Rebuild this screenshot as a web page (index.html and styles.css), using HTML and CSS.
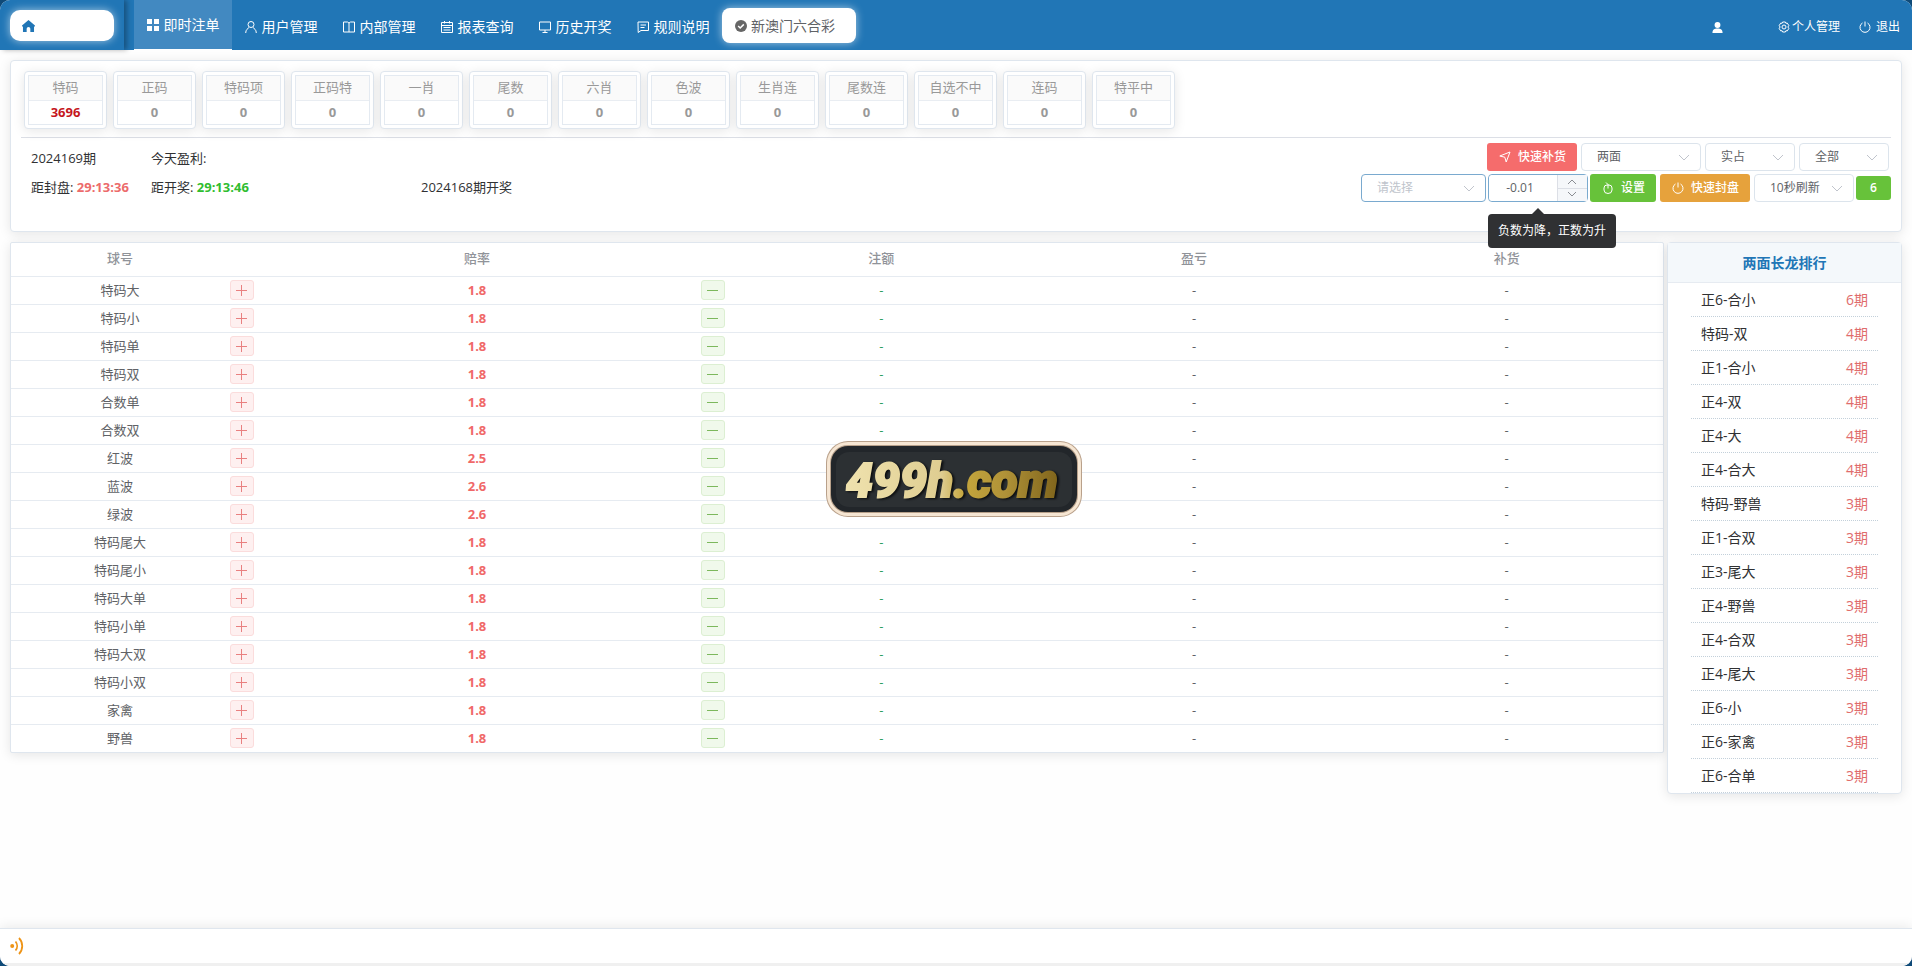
FILE: index.html
```html
<!DOCTYPE html>
<html lang="zh-CN">
<head>
<meta charset="utf-8">
<title>即时注单</title>
<link rel="stylesheet" href="styles.css">
</head>
<body>
<div class="app">
  <header class="topbar">
    <div class="brand">
      <a class="brand-box" href="#" aria-label="首页">
        <svg class="ico-home" viewBox="0 0 14 13"><path d="M7 0 0 6v1h1v6h4V9.500a2 2 0 0 1 4 0V13h4V7h1V6z" fill="#2176b6"/></svg>
      </a>
    </div>
    <nav class="nav">
      <a class="nav-item active" href="#"><svg viewBox="0 0 12 12"><path d="M0 0h5v5H0zM7 0h5v5H7zM0 7h5v5H0zM7 7h5v5H7z" fill="currentColor"/></svg>即时注单</a>
      <a class="nav-item" href="#"><svg viewBox="0 0 12 12" class="line"><circle cx="6" cy="3.500" r="3"/><path d="M.7 12C.7 8.500 3 7.500 4 6.500M11.300 12C11.300 8.500 9 7.500 8 6.500"/></svg>用户管理</a>
      <a class="nav-item" href="#"><svg viewBox="0 0 12 12" class="line"><path d="M.5 1h4L6 2l1.500-1h4v10h-11zM6 2v9"/></svg>内部管理</a>
      <a class="nav-item" href="#"><svg viewBox="0 0 12 12" class="line"><path d="M.5 1.500h11v10H.5zM.5 4.500h11M3.500 0v2.500M8.500 0v2.500M2.500 6.500h7M2.500 9h7" /></svg>报表查询</a>
      <a class="nav-item" href="#"><svg viewBox="0 0 12 12" class="line"><path d="M.5 1h11v8H.5zM6 9v2.500M3.500 11.500h5"/></svg>历史开奖</a>
      <a class="nav-item" href="#"><svg viewBox="0 0 12 12" class="line"><path d="M1 1h10.500v8.500H4l-2.800 2zM3.500 4h5.500M3.500 6.500h4"/></svg>规则说明</a>
    </nav>
    <button class="game" type="button"><svg viewBox="0 0 12 12"><circle cx="6" cy="6" r="6" fill="#666"/><path d="M3.200 6l2 2 3.600-3.600" fill="none" stroke="#fff" stroke-width="1.500"/></svg>新澳门六合彩</button>
    <div class="user">
      <svg class="ico-user" viewBox="0 0 12 12"><circle cx="6" cy="3.300" r="3.200" fill="#fff"/><path d="M.5 12c0-4 2-5 5.500-5s5.500 1 5.500 5z" fill="#fff"/></svg>
      <a class="user-link self" href="#"><svg viewBox="0 0 12 12" class="line"><circle cx="6" cy="6" r="2"/><path d="M4.600 1h2.800l.5 1.300 1.400-.2 1.500 2.400-.9 1.500.9 1.500-1.500 2.400-1.400-.2-.5 1.300H4.600l-.5-1.300-1.400.2-1.500-2.400L2.100 6l-.9-1.500 1.500-2.400 1.400.2z"/></svg>个人管理</a>
      <a class="user-link exit" href="#"><svg viewBox="0 0 12 12" class="line"><path d="M3.500 2a5 5 0 1 0 5 0M6 .5v5"/></svg>退出</a>
    </div>
  </header>

  <main class="content">
    <section class="panel summary">
      <ul class="stats">
        <li class="stat hot"><div class="stat-in"><span>特码</span><b>3696</b></div></li>
        <li class="stat"><div class="stat-in"><span>正码</span><b>0</b></div></li>
        <li class="stat"><div class="stat-in"><span>特码项</span><b>0</b></div></li>
        <li class="stat"><div class="stat-in"><span>正码特</span><b>0</b></div></li>
        <li class="stat"><div class="stat-in"><span>一肖</span><b>0</b></div></li>
        <li class="stat"><div class="stat-in"><span>尾数</span><b>0</b></div></li>
        <li class="stat"><div class="stat-in"><span>六肖</span><b>0</b></div></li>
        <li class="stat"><div class="stat-in"><span>色波</span><b>0</b></div></li>
        <li class="stat"><div class="stat-in"><span>生肖连</span><b>0</b></div></li>
        <li class="stat"><div class="stat-in"><span>尾数连</span><b>0</b></div></li>
        <li class="stat"><div class="stat-in"><span>自选不中</span><b>0</b></div></li>
        <li class="stat"><div class="stat-in"><span>连码</span><b>0</b></div></li>
        <li class="stat"><div class="stat-in"><span>特平中</span><b>0</b></div></li>
      </ul>
      <div class="bar">
        <div class="info">
          <span>2024169期</span><span>今天盈利:</span><span></span>
          <span>距封盘: <b class="red">29:13:36</b></span><span>距开奖: <b class="green">29:13:46</b></span><span>2024168期开奖</span>
        </div>
        <div class="controls">
          <div class="row first">
            <button class="btn danger" type="button"><svg viewBox="0 0 12 12" class="line"><path d="M.8 5 11 1 7.200 11 5.800 6.200z"/></svg>快速补货</button>
            <span class="sel w120"><select aria-label="盘口类型"><option>两面</option></select><svg viewBox="0 0 12 7"><path d="M1 1l5 5 5-5"/></svg></span>
            <span class="sel w90"><select aria-label="占成"><option>实占</option></select><svg viewBox="0 0 12 7"><path d="M1 1l5 5 5-5"/></svg></span>
            <span class="sel w90"><select aria-label="范围"><option>全部</option></select><svg viewBox="0 0 12 7"><path d="M1 1l5 5 5-5"/></svg></span>
          </div>
          <div class="row second">
            <span class="sel w125 focus empty"><select aria-label="选择项目"><option>请选择</option></select><svg viewBox="0 0 12 7"><path d="M1 1l5 5 5-5"/></svg></span>
            <span class="num">
              <input type="text" value="-0.01" aria-label="赔率调整">
              <span class="steps">
                <button type="button" aria-label="增加"><svg viewBox="0 0 12 7"><path d="M2 6l4-4 4 4"/></svg></button>
                <button type="button" aria-label="减少"><svg viewBox="0 0 12 7"><path d="M2 1l4 4 4-4"/></svg></button>
              </span>
              <span class="tip" role="tooltip">负数为降，正数为升</span>
            </span>
            <button class="btn success" type="button"><svg viewBox="0 0 12 12" class="line"><path d="M2 6q0-3 3-3h2q3 0 3 3v2a4 3.500 0 0 1-8 0zM6 6.500V2.500L4 .5"/></svg>设置</button>
            <button class="btn warning" type="button"><svg viewBox="0 0 12 12" class="line"><path d="M3.500 2a5 5 0 1 0 5 0M6 .5v5"/></svg>快速封盘</button>
            <span class="sel w100"><select aria-label="刷新间隔"><option>10秒刷新</option></select><svg viewBox="0 0 12 7"><path d="M1 1l5 5 5-5"/></svg></span>
            <button class="btn count" type="button">6</button>
          </div>
        </div>
      </div>
    </section>

    <div class="columns">
      <section class="panel board">
        <table class="odds">
          <colgroup><col class="c-name"><col class="c-btn"><col class="c-odds"><col class="c-btn"><col><col><col></colgroup>
          <thead><tr><th>球号</th><th></th><th>赔率</th><th></th><th>注额</th><th>盈亏</th><th>补货</th></tr></thead>
          <tbody id="odds"></tbody>
        </table>
      </section>
      <aside class="panel rank">
        <h2>两面长龙排行</h2>
        <ol id="rank"></ol>
      </aside>
    </div>
  </main>

  <footer class="footer">
    <svg viewBox="0 0 14 18"><circle cx="2.200" cy="9" r="2" fill="#ee9417"/><path d="M5.500 4.500a7 7 0 0 1 0 9M9 1a11.500 11.500 0 0 1 0 16" fill="none" stroke="#ee9417" stroke-width="1.800"/></svg>
  </footer>

  <svg class="plate" viewBox="0 0 256 76" role="img" aria-label="499h.com">
    <defs>
      <linearGradient id="gold" x1="0" x2="1" y1="0" y2="0"><stop offset="0" stop-color="#efe2ae"/><stop offset=".45" stop-color="#dfcd91"/><stop offset=".56" stop-color="#c4a53c"/><stop offset=".75" stop-color="#b09238"/><stop offset="1" stop-color="#80651c"/></linearGradient>
    </defs>
    <rect x="0" y="0" width="256" height="76" rx="22" fill="#b9a18b"/>
    <rect x="1" y="1" width="254" height="74" rx="21" fill="#f6e6d3"/>
    <rect x="4" y="4" width="248" height="68" rx="18" fill="#b7a08a"/>
    <rect x="5" y="5" width="246" height="66" rx="17" fill="#22262a"/>
    <rect x="10" y="11" width="236" height="55" rx="13" fill="#2c3033"/>
    <text x="20" y="56" class="plate-text">499h.com</text>
  </svg>
</div>
<script src="app.js"></script>
</body>
</html>
```

FILE: styles.css
```css
* { box-sizing: border-box; }

body {
  margin: 0;
  background: #0f4a78;
  color: #303133;
  font: 13px/20px "Open Sans", "Noto Sans CJK SC", sans-serif;
}

a { color: inherit; text-decoration: none; }
button, input, select { font: inherit; color: inherit; margin: 0; }
ul, ol, h2 { margin: 0; padding: 0; list-style: none; }
svg { flex: none; }
.line { fill: none; stroke: currentColor; stroke-width: 1; }

.app {
  position: relative;
  display: flex;
  flex-direction: column;
  min-height: 100vh;
  overflow: hidden;
  border-radius: 10px;
  background: #fefefe;
}

/* top bar */
.topbar {
  display: flex;
  height: 50px;
  background: #2176b6;
  color: #fff;
}
.brand {
  width: 124px;
  padding: 10px;
  box-shadow: 3px 0 5px rgba(0, 0, 0, .3);
}
.brand-box {
  display: flex;
  align-items: center;
  height: 31px;
  padding-left: 12px;
  border-radius: 10px;
  background: #fff;
  box-shadow: 0 0 8px rgba(255, 255, 255, .6);
}
.brand-box svg { width: 13px; height: 12px; }
.nav { display: flex; margin-left: 10px; }
.nav-item {
  display: flex;
  align-items: center;
  justify-content: center;
  gap: 5px;
  width: 98px;
  height: 50px;
  padding-top: 4px;
  font-size: 14px;
}
.nav-item svg { width: 12px; height: 12px; }
.nav-item.active {
  padding-top: 0;
  border-bottom: 1px solid #fff;
  background: #4289c1;
}
.game {
  display: flex;
  align-items: center;
  gap: 4px;
  height: 35px;
  margin: 8px 0 0;
  padding: 0 21px 0 13px;
  border: 0;
  border-radius: 8px;
  background: #fff;
  box-shadow: 0 0 8px rgba(255, 255, 255, .6);
  color: #606266;
  font-size: 14px;
}
.game svg { width: 12px; height: 12px; }
.user {
  display: flex;
  align-items: center;
  margin-left: auto;
  padding: 4px 12px 0 0;
  font-size: 12px;
}
.user-link { display: flex; align-items: center; gap: 2px; }
.user-link svg { width: 12px; height: 12px; }
.ico-user { width: 11px; height: 11px; }
.self { margin-left: 55px; }
.exit { gap: 5px; margin-left: 19px; }

/* panels */
.content { flex: 1; padding: 10px 10px 20px; }
.panel {
  border: 1px solid #dfe6ee;
  border-radius: 4px;
  background: #fff;
  box-shadow: 0 2px 12px rgba(0, 0, 0, .1);
}
.summary { height: 172px; padding: 10px; }
.stats { display: flex; gap: 6px; padding: 0 3px 8px; border-bottom: 1px solid #dcdfe6; }
.stat {
  width: 83px;
  height: 58px;
  padding: 3px;
  border: 1px solid #dfe6ee;
  border-radius: 4px;
  background: #fff;
  box-shadow: 0 2px 12px rgba(0, 0, 0, .1);
  color: #999;
  text-align: center;
}
.stat-in { height: 50px; border: 1px solid #e4eaf1; }
.stat span { display: block; height: 25px; border-bottom: 1px solid #e9edf2; background: #fafafa; line-height: 22px; }
.stat b { display: block; font-weight: 700; line-height: 22px; }
.stat.hot b { color: #c5161d; }

.bar { display: flex; justify-content: space-between; padding-top: 5px; }
.info {
  display: grid;
  grid-template-columns: 120px 270px auto;
  grid-auto-rows: 29px;
  padding: 1px 0 0 10px;
  line-height: 29px;
}
.red { color: #ec6b6b; }
.green { color: #2fbd2f; }

.controls { display: flex; flex-direction: column; gap: 3px; font-size: 12px; }
.row { display: flex; align-items: center; justify-content: flex-end; gap: 4px; }
.row.first { padding-right: 2px; }
.row.second { gap: 2px; }
.btn {
  display: flex;
  align-items: center;
  justify-content: center;
  gap: 7px;
  height: 28px;
  padding: 0 11px 0 12px;
  border: 0;
  border-radius: 3px;
  color: #fff;
  font-weight: 500;
}
.btn svg { width: 12px; height: 12px; }
.danger { background: #f56c6c; }
.success { background: #67c23a; }
.warning { margin: 0 2px; background: #e6a23c; }
.count { width: 35px; height: 24px; padding: 0; background: #67c23a; font-weight: 600; }
.sel { position: relative; display: flex; }
.sel select {
  width: 100%;
  height: 28px;
  padding: 0 15px;
  border: 1px solid #dce4ec;
  border-radius: 4px;
  background: #fff;
  color: #606266;
  appearance: none;
}
.sel svg {
  position: absolute;
  right: 11px;
  top: 11px;
  width: 12px;
  height: 7px;
  fill: none;
  stroke: #c0c4cc;
  pointer-events: none;
}
.sel.focus select { border-color: #7aaacf; }
.sel.empty select { color: #c0c4cc; }
.w90 { width: 90px; }
.w100 { width: 100px; }
.w120 { width: 120px; }
.w125 { width: 125px; }
.num {
  position: relative;
  display: flex;
  width: 100px;
  height: 28px;
  border: 1px solid #7aaacf;
  border-radius: 4px;
}
.num input {
  flex: 1;
  min-width: 0;
  padding: 0 6px 0 0;
  border: 0;
  border-radius: 4px;
  background: #fff;
  color: #606266;
  text-align: center;
}
.steps { display: flex; flex-direction: column; width: 30px; border-left: 1px solid #dcdfe6; }
.steps button {
  display: flex;
  flex: 1;
  align-items: center;
  justify-content: center;
  padding: 0;
  border: 0;
  background: #f5f7fa;
}
.steps button + button { border-top: 1px solid #dcdfe6; }
.steps svg { width: 12px; height: 7px; fill: none; stroke: #8a8d93; }
.tip {
  position: absolute;
  z-index: 3;
  left: -1px;
  top: 39px;
  padding: 7px 10px;
  border-radius: 4px;
  background: #303133;
  color: #fff;
  white-space: nowrap;
}
.tip::before {
  content: "";
  position: absolute;
  left: 44px;
  top: -6px;
  border: 6px solid transparent;
  border-top: 0;
  border-bottom-color: #303133;
}

/* odds table and ranking */
.columns { display: flex; align-items: flex-start; gap: 3px; margin-top: 10px; }
.board { flex: 1; border-radius: 2px; }
.odds { width: 100%; table-layout: fixed; border-collapse: collapse; color: #606266; text-align: center; }
.c-name { width: 218px; }
.c-btn { width: 25px; }
.c-odds { width: 27%; }
.odds th { height: 33px; padding: 0 0 2px; color: #909399; font-weight: 500; }
.odds td { height: 28px; padding: 0; border-top: 1px solid #e6ebf1; }
.odds .rate { color: #f06868; font-weight: 700; }
.odds .amount { color: #2f9e62; }
.step {
  display: flex;
  align-items: center;
  justify-content: center;
  width: 24px;
  height: 20px;
  margin: auto;
  padding: 0;
  border: 1px solid #fbdcdc;
  border-radius: 3px;
  background: #fef0f0;
  color: #e98080;
}
.step svg { width: 11px; height: 11px; }
.step.minus { border-color: #dcefd2; background: #f0f9eb; color: #7cb85c; }

.rank { width: 235px; }
.rank h2 {
  height: 40px;
  border-bottom: 1px solid #e6ebf1;
  background: #f4f8fb;
  color: #2176b6;
  font-size: 14px;
  font-weight: 700;
  line-height: 40px;
  text-align: center;
}
.rank ol { padding: 0 23px; font-size: 14px; line-height: 33px; }
.rank li {
  display: flex;
  justify-content: space-between;
  padding: 0 10px;
  border-bottom: 1px dotted #c3d0da;
}
.rank span { color: #e06c6c; }

.footer {
  display: flex;
  align-items: center;
  height: 38px;
  padding-left: 10px;
  border-top: 1px solid #dfe6ee;
  border-bottom: 3px solid #f0f0f0;
  background: #fff;
  box-shadow: 0 -2px 12px rgba(0, 0, 0, .08);
}
.footer svg { width: 14px; height: 18px; }

/* floating name plate */
.plate {
  position: absolute;
  left: calc(50% - 130px);
  top: calc(50% - 42px);
  width: 256px;
  height: 76px;
}
.plate-text {
  fill: url(#gold);
  stroke: url(#gold);
  stroke-width: 2;
  filter: drop-shadow(2px 1px 1px #0c0d0e);
  font: italic 900 48px Roboto, "Liberation Sans", sans-serif;
}
```

FILE: app.js
```js
const odds = [
  ["特码大", "1.8"], ["特码小", "1.8"], ["特码单", "1.8"], ["特码双", "1.8"],
  ["合数单", "1.8"], ["合数双", "1.8"], ["红波", "2.5"], ["蓝波", "2.6"],
  ["绿波", "2.6"], ["特码尾大", "1.8"], ["特码尾小", "1.8"], ["特码大单", "1.8"],
  ["特码小单", "1.8"], ["特码大双", "1.8"], ["特码小双", "1.8"], ["家禽", "1.8"],
  ["野兽", "1.8"],
];
const ranking = [
  ["正6-合小", 6], ["特码-双", 4], ["正1-合小", 4], ["正4-双", 4], ["正4-大", 4],
  ["正4-合大", 4], ["特码-野兽", 3], ["正1-合双", 3], ["正3-尾大", 3], ["正4-野兽", 3],
  ["正4-合双", 3], ["正4-尾大", 3], ["正6-小", 3], ["正6-家禽", 3], ["正6-合单", 3],
];
const icon = (d) => `<svg viewBox="0 0 11 11" class="line"><path d="${d}"/></svg>`;

document.getElementById("odds").innerHTML = odds.map(([name, rate]) => `<tr>
  <td>${name}</td>
  <td><button class="step" type="button" aria-label="${name} 升">${icon("M0 5.5h11M5.5 0v11")}</button></td>
  <td class="rate">${rate}</td>
  <td><button class="step minus" type="button" aria-label="${name} 降">${icon("M0 5.5h11")}</button></td>
  <td class="amount">-</td><td>-</td><td>-</td>
</tr>`).join("");

document.getElementById("rank").innerHTML = ranking
  .map(([name, n]) => `<li>${name}<span>${n}期</span></li>`).join("");
```
